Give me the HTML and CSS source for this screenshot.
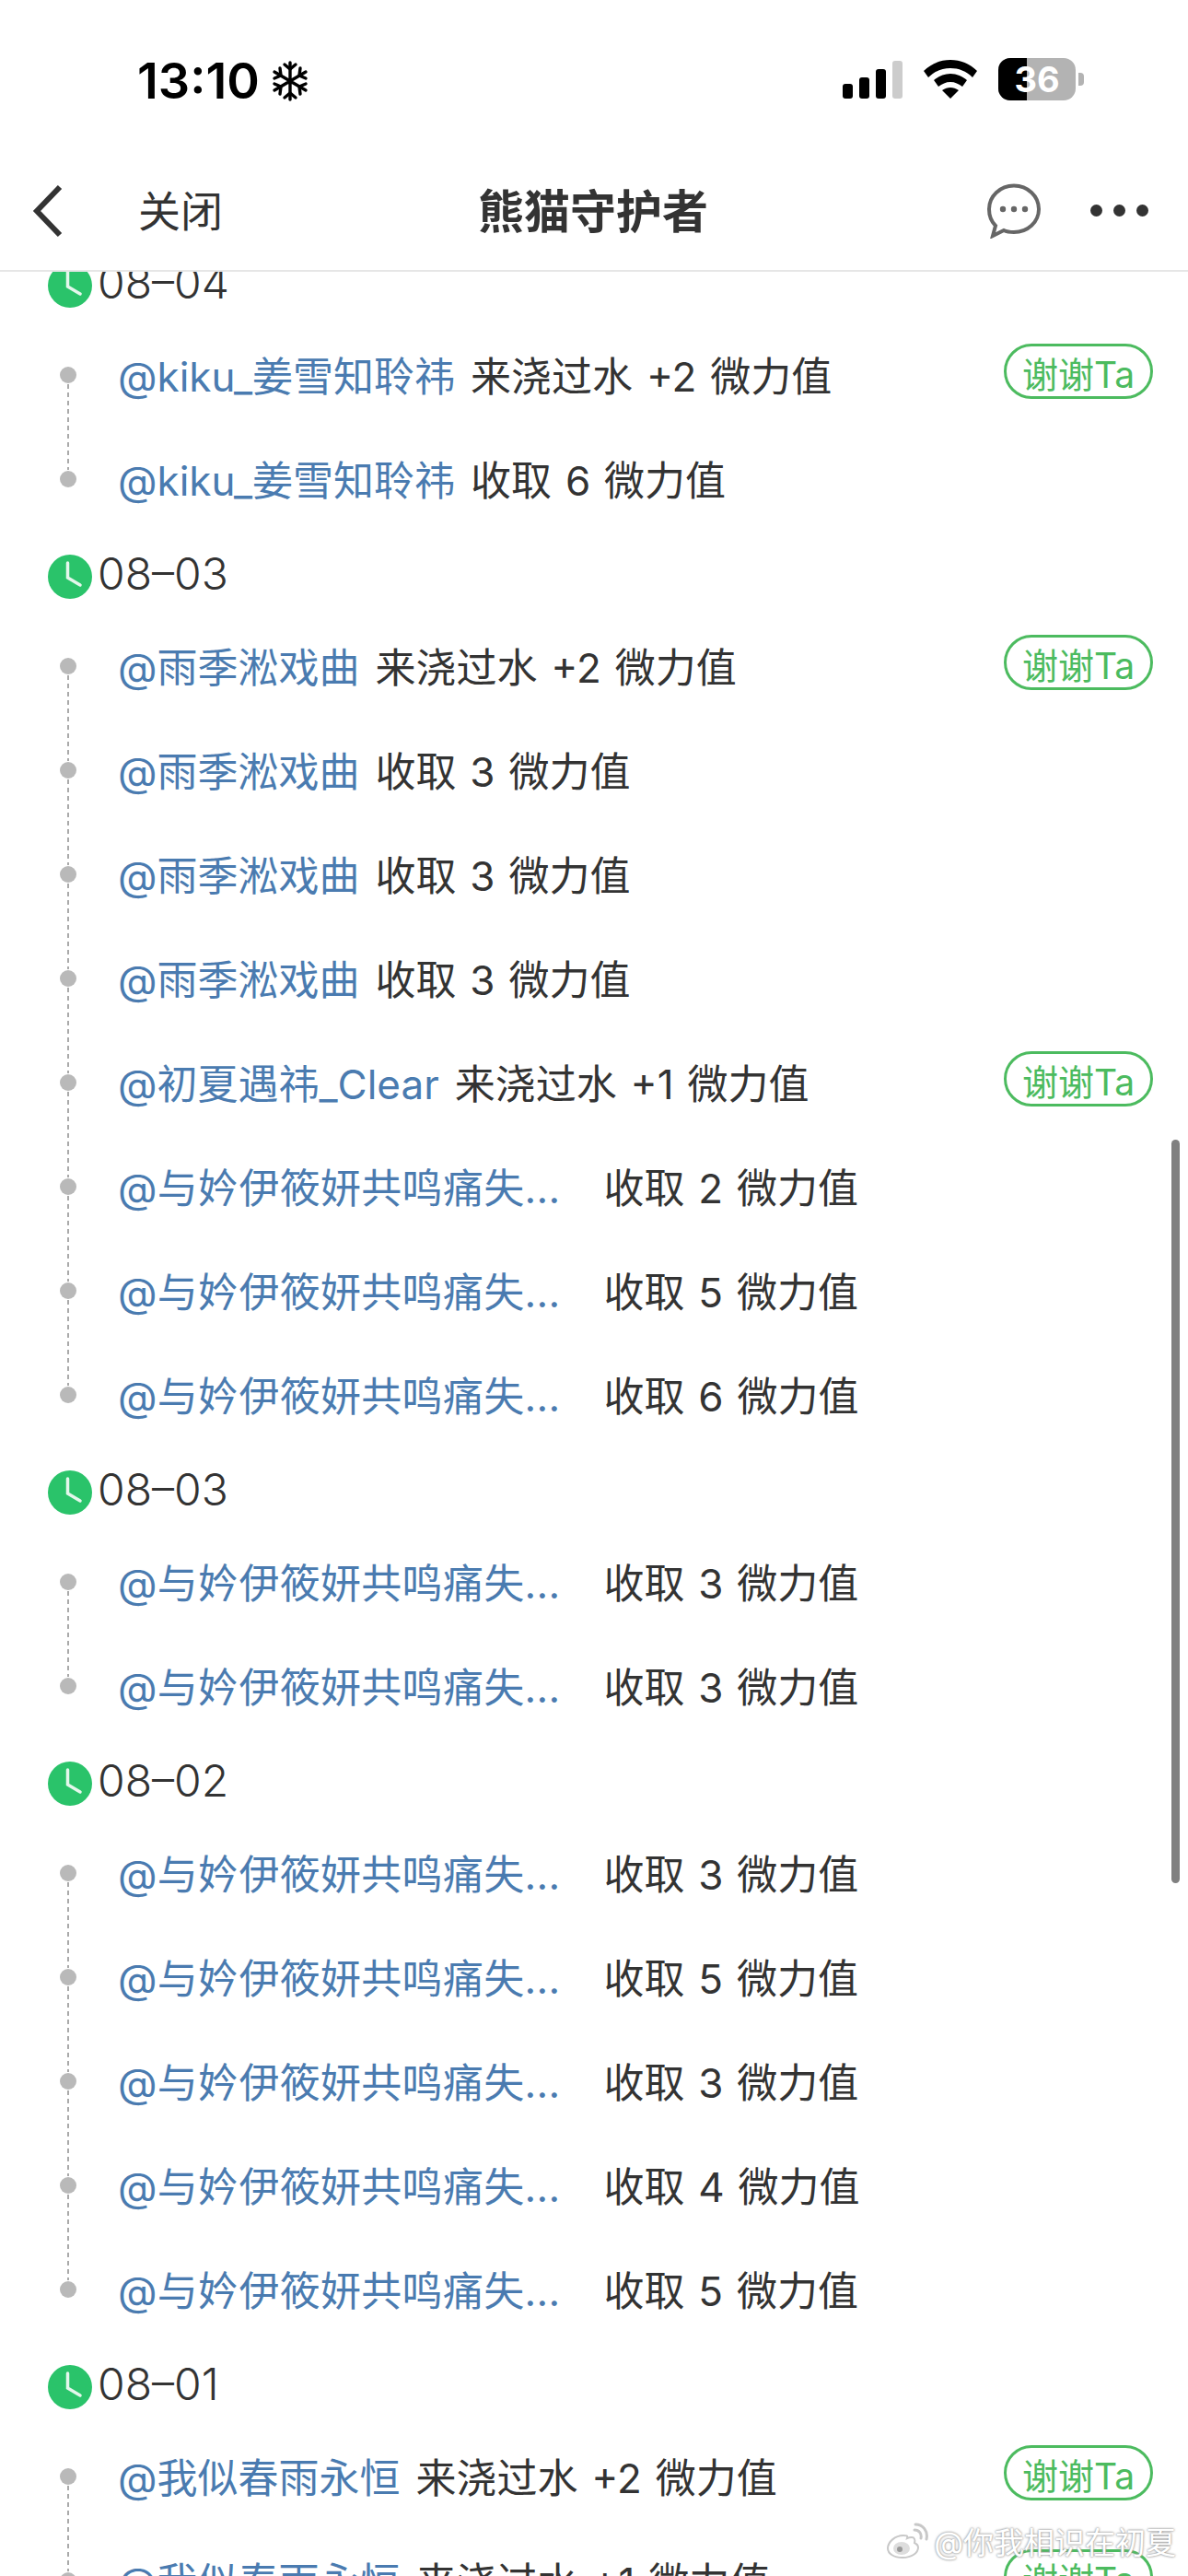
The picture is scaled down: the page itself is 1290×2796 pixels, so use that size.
FILE: index.html
```html
<!DOCTYPE html>
<html lang="zh">
<head>
    <meta charset="UTF-8">
    <meta name="viewport" content="width=device-width, initial-scale=1.0">
    <title>熊猫守护者</title>
    <link rel="stylesheet" href="styles.css">
</head>
<body>
    <div class="phone">
        <div class="status">
            <div class="clock-now">
                <span class="time">13:10</span>
                <svg class="flake" viewBox="0 0 40 44" width="40" height="44">
                    <g stroke="#000" stroke-width="3.4" stroke-linecap="round" fill="none">
                        <path d="M20 2V42M3 12L37 32M37 12L3 32"/>
                        <path d="M14 4L20 9L26 4M14 40L20 35L26 40"/>
                        <path d="M3 19L10 16L9 8M37 25L30 28L31 36M37 19L30 16L31 8M3 25L10 28L9 36"/>
                    </g>
                </svg>
            </div>
            <div class="indicators">
                <div class="signal">
                    <i class="bar b1"></i><i class="bar b2"></i><i class="bar b3"></i><i class="bar b4"></i>
                </div>
                <svg class="wifi" viewBox="0 0 58 42" width="58" height="42">
                    <path d="M29 0C40 0 50 4 58 12L53 19C46 12 38 9 29 9C20 9 12 12 5 19L0 12C8 4 18 0 29 0Z"/>
                    <path d="M29 15C36 15 42 18 47 22L42 29C38 26 34 24 29 24C24 24 20 26 16 29L11 22C16 18 22 15 29 15Z"/>
                    <path d="M29 30C32 30 35 31 38 33L29 42L20 33C23 31 26 30 29 30Z"/>
                </svg>
                <div class="battery">
                    <div class="cell"><span class="cell-fill"></span><span class="level">36</span></div>
                    <i class="cap"></i>
                </div>
            </div>
        </div>

        <nav class="topbar">
            <div class="nav-left">
                <svg class="back" viewBox="0 0 34 58" width="34" height="58">
                    <path d="M30 3L5 29L30 55" fill="none" stroke="#333" stroke-width="6"/>
                </svg>
                <span class="close">关闭</span>
            </div>
            <h1 class="title">熊猫守护者</h1>
            <div class="nav-right">
                <svg class="chat" viewBox="0 0 62 60" width="62" height="60">
                    <path d="M31 2.500C46 2.500 58 14 58 28C58 42 46 53 31 53C27 53 23 52.500 20 51L8 57L11 46C6 41 4 35 4 28C4 14 16 2.500 31 2.500Z" fill="none" stroke="#666" stroke-width="4"/>
                    <circle cx="19" cy="28" r="3.200" fill="#666"/>
                    <circle cx="31" cy="28" r="3.200" fill="#666"/>
                    <circle cx="43" cy="28" r="3.200" fill="#666"/>
                </svg>
                <div class="more"><i></i><i></i><i></i></div>
            </div>
        </nav>

        <main class="feed">
            <div class="feed-inner">
                <section class="day">
                    <div class="day-head"><svg class="clock" viewBox="0 0 48 48" width="48" height="48"><circle cx="24" cy="24" r="24" fill="#2ac36a"/><path d="M21.500 9V25L35 33" fill="none" stroke="#e4f7ec" stroke-width="3.500" stroke-linecap="round"/></svg><span>08–04</span></div>
                    <div class="row"><i class="dot"></i><span class="who">@kiku_姜雪知聆祎</span><span class="what">来浇过水 +2 微力值</span><button class="thanks">谢谢Ta</button></div>
                    <div class="row"><i class="dot"></i><span class="who">@kiku_姜雪知聆祎</span><span class="what">收取 6 微力值</span></div>
                </section>
                <section class="day">
                    <div class="day-head"><svg class="clock" viewBox="0 0 48 48" width="48" height="48"><circle cx="24" cy="24" r="24" fill="#2ac36a"/><path d="M21.500 9V25L35 33" fill="none" stroke="#e4f7ec" stroke-width="3.500" stroke-linecap="round"/></svg><span>08–03</span></div>
                    <div class="row"><i class="dot"></i><span class="who">@雨季淞戏曲</span><span class="what">来浇过水 +2 微力值</span><button class="thanks">谢谢Ta</button></div>
                    <div class="row"><i class="dot"></i><span class="who">@雨季淞戏曲</span><span class="what">收取 3 微力值</span></div>
                    <div class="row"><i class="dot"></i><span class="who">@雨季淞戏曲</span><span class="what">收取 3 微力值</span></div>
                    <div class="row"><i class="dot"></i><span class="who">@雨季淞戏曲</span><span class="what">收取 3 微力值</span></div>
                    <div class="row"><i class="dot"></i><span class="who">@初夏遇祎_Clear</span><span class="what">来浇过水 +1 微力值</span><button class="thanks">谢谢Ta</button></div>
                    <div class="row"><i class="dot"></i><span class="who cut">@与妗伊筱妍共鸣痛失...</span><span class="what">收取 2 微力值</span></div>
                    <div class="row"><i class="dot"></i><span class="who cut">@与妗伊筱妍共鸣痛失...</span><span class="what">收取 5 微力值</span></div>
                    <div class="row"><i class="dot"></i><span class="who cut">@与妗伊筱妍共鸣痛失...</span><span class="what">收取 6 微力值</span></div>
                </section>
                <section class="day">
                    <div class="day-head"><svg class="clock" viewBox="0 0 48 48" width="48" height="48"><circle cx="24" cy="24" r="24" fill="#2ac36a"/><path d="M21.500 9V25L35 33" fill="none" stroke="#e4f7ec" stroke-width="3.500" stroke-linecap="round"/></svg><span>08–03</span></div>
                    <div class="row"><i class="dot"></i><span class="who cut">@与妗伊筱妍共鸣痛失...</span><span class="what">收取 3 微力值</span></div>
                    <div class="row"><i class="dot"></i><span class="who cut">@与妗伊筱妍共鸣痛失...</span><span class="what">收取 3 微力值</span></div>
                </section>
                <section class="day">
                    <div class="day-head"><svg class="clock" viewBox="0 0 48 48" width="48" height="48"><circle cx="24" cy="24" r="24" fill="#2ac36a"/><path d="M21.500 9V25L35 33" fill="none" stroke="#e4f7ec" stroke-width="3.500" stroke-linecap="round"/></svg><span>08–02</span></div>
                    <div class="row"><i class="dot"></i><span class="who cut">@与妗伊筱妍共鸣痛失...</span><span class="what">收取 3 微力值</span></div>
                    <div class="row"><i class="dot"></i><span class="who cut">@与妗伊筱妍共鸣痛失...</span><span class="what">收取 5 微力值</span></div>
                    <div class="row"><i class="dot"></i><span class="who cut">@与妗伊筱妍共鸣痛失...</span><span class="what">收取 3 微力值</span></div>
                    <div class="row"><i class="dot"></i><span class="who cut">@与妗伊筱妍共鸣痛失...</span><span class="what">收取 4 微力值</span></div>
                    <div class="row"><i class="dot"></i><span class="who cut">@与妗伊筱妍共鸣痛失...</span><span class="what">收取 5 微力值</span></div>
                </section>
                <section class="day">
                    <div class="day-head"><svg class="clock" viewBox="0 0 48 48" width="48" height="48"><circle cx="24" cy="24" r="24" fill="#2ac36a"/><path d="M21.500 9V25L35 33" fill="none" stroke="#e4f7ec" stroke-width="3.500" stroke-linecap="round"/></svg><span>08–01</span></div>
                    <div class="row"><i class="dot"></i><span class="who">@我似春雨永恒</span><span class="what">来浇过水 +2 微力值</span><button class="thanks">谢谢Ta</button></div>
                    <div class="row"><i class="dot"></i><span class="who">@我似春雨永恒</span><span class="what">来浇过水 +1 微力值</span><button class="thanks">谢谢Ta</button></div>
                </section>
            </div>
            <div class="scrollbar"></div>
        </main>

        <div class="watermark">
            <svg class="weibo" viewBox="0 0 46 40" width="46" height="40">
                <path d="M19 14C10 14 2 21 2 28C2 34 9 38 18 38C28 38 35 33 35 27C35 24 33 23 31 22C32 19 31 16 28 16C25 16 23 17 23 17C24 14 22 14 19 14Z" fill="#fff" stroke="#c8c8c8" stroke-width="2"/>
                <ellipse cx="17" cy="28" rx="9" ry="7" fill="#ddd"/>
                <circle cx="15" cy="29" r="3" fill="#999"/>
                <path d="M31 8C36 8 39 12 38 17M32 2C40 2 46 9 44 18" fill="none" stroke="#c8c8c8" stroke-width="3" stroke-linecap="round"/>
            </svg>
            <span>@你我相识在初夏</span>
        </div>
    </div>
</body>
</html>
```

FILE: styles.css
```css
* {
    box-sizing: border-box;
}
html, body {
    margin: 0;
    padding: 0;
    background: #fff;
}
body {
    font-family: Inter, "Noto Sans CJK SC", sans-serif;
    color: #333;
}
.phone {
    position: relative;
    width: 1290px;
    height: 2796px;
    overflow: hidden;
    display: flex;
    flex-direction: column;
}

/* status bar */
.status {
    height: 170px;
    flex: none;
    display: flex;
    justify-content: space-between;
    padding: 65px 113px 0 149px;
}
.clock-now {
    display: flex;
    align-items: flex-start;
    gap: 13px;
}
.time {
    font-size: 54px;
    line-height: 46px;
    font-weight: 600;
    color: #000;
}
.flake {
    margin-top: 1px;
}
.indicators {
    display: flex;
    align-items: flex-start;
    gap: 23px;
    margin-top: -2px;
}
.signal {
    display: flex;
    align-items: flex-end;
    gap: 7px;
    height: 41px;
    margin-top: 3px;
}
.bar {
    width: 11px;
    background: #000;
    border-radius: 3px;
}
.b1 { height: 16px; }
.b2 { height: 23px; }
.b3 { height: 32px; }
.b4 { height: 41px; background: #ccc; }
.wifi {
    margin-top: 2px;
}
.battery {
    display: flex;
    align-items: center;
    gap: 3px;
    height: 46px;
}
.cell {
    position: relative;
    width: 84px;
    height: 46px;
    border-radius: 13px;
    background: #b3b3b3;
    overflow: hidden;
    display: flex;
    align-items: center;
    justify-content: center;
}
.cell-fill {
    position: absolute;
    left: 0;
    top: 0;
    width: 31px;
    height: 100%;
    background: #000;
}
.level {
    position: relative;
    color: #fff;
    font-size: 38px;
    font-weight: 700;
}
.cap {
    width: 6px;
    height: 14px;
    background: #b3b3b3;
    border-radius: 0 4px 4px 0;
}

/* nav bar */
.topbar {
    position: relative;
    z-index: 2;
    height: 125px;
    flex: none;
    background: #fff;
    border-bottom: 2px solid #e6e6e6;
    display: flex;
    align-items: center;
    justify-content: space-between;
    padding: 0 0 6px 35px;
}
.nav-left {
    display: flex;
    align-items: center;
    gap: 81px;
    width: 363px;
}
.close {
    font-size: 46px;
    color: #333;
    margin-bottom: 6px;
}
.title {
    margin: 0 0 6px;
    font-size: 50px;
    font-weight: 700;
    color: #333;
}
.nav-right {
    width: 400px;
    display: flex;
    align-items: center;
    justify-content: flex-end;
    gap: 52px;
    padding-right: 43px;
}
.more {
    display: flex;
    gap: 12px;
}
.more i {
    width: 13px;
    height: 13px;
    border-radius: 50%;
    background: #333;
}

/* list */
.feed {
    flex: 1;
    position: relative;
    overflow: hidden;
}
.feed-inner {
    margin-top: -34px;
}
.day-head {
    height: 90px;
    padding: 8px 0 0 52px;
    display: flex;
    align-items: center;
    gap: 6px;
    font-size: 48px;
    font-weight: 300;
}
.day-head span {
    margin-bottom: 7px;
}
.row {
    position: relative;
    height: 113px;
    display: flex;
    align-items: center;
    padding: 0 0 3px 128px;
    font-size: 44px;
    font-weight: 400;
    white-space: nowrap;
}
.dot {
    position: absolute;
    left: 65px;
    top: 47px;
    width: 18px;
    height: 18px;
    border-radius: 50%;
    background: #b9b9b9;
}
.row:not(:last-child) .dot::after {
    content: "";
    position: absolute;
    left: 8px;
    top: 19px;
    width: 2px;
    height: 93px;
    background: repeating-linear-gradient(to bottom, #aaa 0, #aaa 5px, transparent 5px, transparent 9px);
}
.who {
    color: #4a7bb0;
    margin-right: 17px;
}
.cut {
    letter-spacing: 0.3px;
    margin-right: 47px;
}
.what {
    word-spacing: 2.5px;
}
.thanks {
    position: absolute;
    right: 38px;
    top: 22px;
    width: 162px;
    height: 60px;
    padding: 0 0 10px;
    background: #fff;
    border: 3px solid #4cbb5f;
    border-radius: 30px;
    color: #4cbb5f;
    font-family: inherit;
    font-size: 39px;
    font-weight: 400;
}
.scrollbar {
    position: absolute;
    right: 9px;
    top: 942px;
    width: 9px;
    height: 807px;
    border-radius: 5px;
    background: #808080;
}

/* weibo watermark */
.watermark {
    position: absolute;
    right: 13px;
    bottom: 14px;
    display: flex;
    align-items: center;
    gap: 6px;
    font-size: 33px;
    color: #fff;
    text-shadow: 0 0 3px #9a9a9a, 0 0 2px #9a9a9a;
}
```
